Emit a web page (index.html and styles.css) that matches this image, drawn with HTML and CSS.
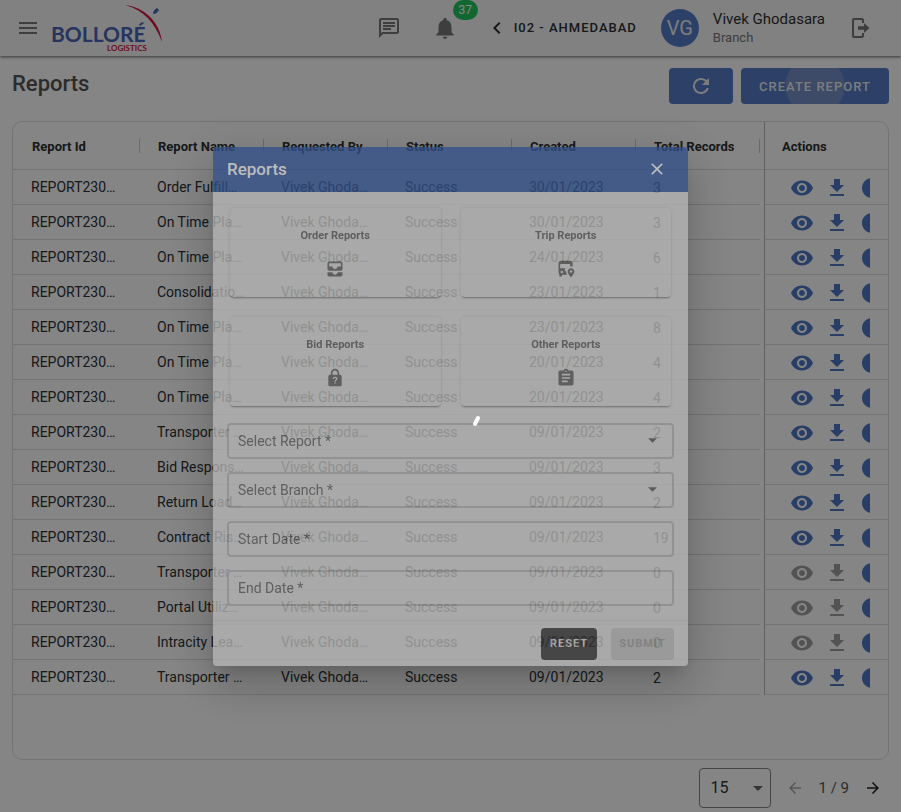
FILE: index.html
```html
<!DOCTYPE html>
<html lang="en">
<head>
<meta charset="utf-8">
<title>Reports</title>
<link rel="stylesheet" href="styles.css">
</head>
<body>
<svg class="sprite" aria-hidden="true">
  <symbol id="i-eye" viewBox="0 0 24 24"><path d="M12 4.5C7 4.5 2.73 7.61 1 12c1.73 4.39 6 7.5 11 7.5s9.27-3.11 11-7.5c-1.73-4.39-6-7.5-11-7.5zM12 17c-2.76 0-5-2.24-5-5s2.24-5 5-5 5 2.24 5 5-2.24 5-5 5zm0-8c-1.66 0-3 1.34-3 3s1.34 3 3 3 3-1.34 3-3-1.34-3-3-3z"/></symbol>
  <symbol id="i-download" viewBox="0 0 24 24"><path d="M19 9h-4V3H9v6H5l7 7 7-7zM5 18v2h14v-2H5z"/></symbol>
  <symbol id="i-info" viewBox="0 0 24 24"><path d="M12 2C6.48 2 2 6.48 2 12s4.48 10 10 10 10-4.48 10-10S17.52 2 12 2zm1 15h-2v-6h2v6zm0-8h-2V7h2v2z"/></symbol>
</svg>

<header class="topbar">
  <button class="icon-btn menu" aria-label="Menu"><svg width="24" height="24" viewBox="0 0 24 24"><path d="M3 18h18v-2H3v2zm0-5h18v-2H3v2zm0-7v2h18V6H3z"/></svg></button>
  <svg class="logo" width="112" height="52" viewBox="0 0 112 52" role="img" aria-label="Bolloré Logistics">
    <text class="logo-name" x="-1" y="40">BOLLORÉ</text>
    <text class="logo-sub" x="55" y="49">LOGISTICS</text>
    <path class="logo-arc" d="M73 3C92 5 108 20 110 40C103 21 92 8 73 3z"/>
    <path class="logo-mark" d="M101 12c0-3 2-5 4-6l2 2c-1 2-3 4-6 4z"/>
  </svg>
  <div class="grow"></div>
  <button class="icon-btn chat" aria-label="Messages"><svg width="24" height="24" viewBox="0 0 24 24"><path d="M4 4h16v12H5.170L4 17.170V4m0-2c-1.100 0-1.990.9-1.990 2L2 22l4-4h14c1.100 0 2-.9 2-2V4c0-1.100-.9-2-2-2H4zm2 10h8v2H6v-2zm0-3h12v2H6V9zm0-3h12v2H6V6z"/></svg></button>
  <button class="icon-btn bell" aria-label="Notifications"><svg width="26" height="26" viewBox="0 0 24 24"><path d="M12 22c1.100 0 2-.9 2-2h-4c0 1.100.89 2 2 2zm6-6v-5c0-3.070-1.640-5.640-4.500-6.320V4c0-.83-.67-1.500-1.500-1.500s-1.500.67-1.500 1.500v.68C7.630 5.360 6 7.920 6 11v5l-2 2v1h16v-1l-2-2z"/></svg><span class="badge">37</span></button>
  <button class="branch"><svg width="24" height="24" viewBox="0 0 24 24"><path d="M15.410 7.410L14 6l-6 6 6 6 1.410-1.410L10.830 12z"/></svg>I02 - AHMEDABAD</button>
  <div class="avatar">VG</div>
  <div class="user"><div class="user-name">Vivek Ghodasara</div><div class="user-role">Branch</div></div>
  <button class="icon-btn logout" aria-label="Log out"><svg width="20" height="22" viewBox="0 0 20 22"><path d="M13 6V3a2 2 0 0 0-2-2H3a2 2 0 0 0-2 2v16a2 2 0 0 0 2 2h8a2 2 0 0 0 2-2v-3h-2v3H3V3h8v3zM7 9.300v3.400h6V16l5.500-5L13 6v3.300z"/></svg></button>
</header>

<main class="page">
  <div class="page-head">
    <h1>Reports</h1>
    <button class="btn refresh" aria-label="Refresh"><svg width="24" height="24" viewBox="0 0 24 24"><path d="M17.650 6.350C16.200 4.900 14.210 4 12 4c-4.420 0-7.990 3.580-7.990 8s3.570 8 7.990 8c3.730 0 6.840-2.550 7.730-6h-2.080c-.82 2.330-3.040 4-5.650 4-3.310 0-6-2.690-6-6s2.690-6 6-6c1.660 0 3.140.69 4.220 1.780L13 11h7V4l-2.350 2.350z"/></svg></button>
    <button class="btn create">CREATE REPORT</button>
  </div>

  <section class="grid-card">
    <table>
      <colgroup><col class="c-id"><col><col><col><col><col class="c-total"><col class="c-act"></colgroup>
      <thead><tr><th>Report Id</th><th>Report Name</th><th>Requested By</th><th>Status</th><th>Created</th><th class="total">Total Records</th><th class="act">Actions</th></tr></thead>
      <tbody id="rows"></tbody>
    </table>
  </section>

  <footer class="pager">
    <select class="page-size" aria-label="Rows per page"><option>15</option></select>
    <button class="page-btn off" aria-label="Previous page" disabled><svg width="18" height="18" viewBox="0 0 24 24"><path d="M20 11H7.830l5.590-5.590L12 4l-8 8 8 8 1.410-1.410L7.830 13H20v-2z"/></svg></button>
    <span>1 / 9</span>
    <button class="page-btn" aria-label="Next page"><svg width="18" height="18" viewBox="0 0 24 24"><path d="M12 4l-1.410 1.410L16.170 11H4v2h12.170l-5.580 5.590L12 20l8-8z"/></svg></button>
  </footer>
</main>

<div class="backdrop">
  <div class="dialog" role="dialog" aria-labelledby="dlg-title">
    <div class="dialog-head">
      <h2 id="dlg-title">Reports</h2>
      <button class="icon-btn close" aria-label="Close"><svg width="20" height="20" viewBox="0 0 24 24"><path d="M19 6.410L17.590 5 12 10.590 6.410 5 5 6.410 10.590 12 5 17.590 6.410 19 12 13.410 17.590 19 19 17.590 13.410 12z"/></svg></button>
    </div>
    <div class="dialog-body">
      <div class="tiles">
        <button class="tile">Order Reports<svg width="20" height="20" viewBox="0 0 24 24"><path d="M19 3H5c-1.100 0-2 .9-2 2v7c0 1.100.9 2 2 2h14c1.100 0 2-.9 2-2V5c0-1.100-.9-2-2-2zm0 6h-4c0 1.620-1.380 3-3 3s-3-1.380-3-3H5V5h14v4zm-4 7h6v3c0 1.100-.9 2-2 2H5c-1.100 0-2-.9-2-2v-3h6c0 1.660 1.340 3 3 3s3-1.340 3-3z"/></svg></button>
        <button class="tile">Trip Reports<svg width="20" height="20" viewBox="0 0 24 24"><path d="M17 2H6C3.800 2 3 3.500 3 5.500V16c0 1 .4 1.700 1 2.200V21h3v-2h6l-1-4a1.500 1.500 0 1 1 1-4H5V6h12v3h3V5c0-2-1-3-3-3zM7 14a1.500 1.500 0 1 1 0 3 1.500 1.500 0 0 1 0-3zm11-3c-2.200 0-4 1.700-4 4 0 2.700 4 7 4 7s4-4.300 4-7c0-2.300-1.800-4-4-4zm0 5.500a1.500 1.500 0 1 1 0-3 1.500 1.500 0 0 1 0 3z"/></svg></button>
        <button class="tile">Bid Reports<svg width="20" height="20" viewBox="0 0 24 24"><path fill-rule="evenodd" d="M18 8h-1V6c0-2.760-2.240-5-5-5S7 3.240 7 6v2H6c-1.100 0-2 .9-2 2v10c0 1.100.9 2 2 2h12c1.100 0 2-.9 2-2V10c0-1.100-.9-2-2-2zM9 6c0-1.660 1.340-3 3-3s3 1.340 3 3v2H9V6zm2.200 13h1.600v-1.600h-1.600zm-2-5.700h1.500c0-.8.500-1.300 1.300-1.300s1.300.5 1.300 1.200c0 1.100-2.100 1.200-2.100 3.300h1.500c0-1.400 2.200-1.600 2.200-3.500 0-1.400-1.200-2.400-2.900-2.400s-2.800 1.100-2.800 2.700z"/></svg></button>
        <button class="tile">Other Reports<svg width="20" height="20" viewBox="0 0 24 24"><path d="M19 3h-4.180C14.400 1.840 13.300 1 12 1c-1.300 0-2.400.84-2.820 2H5c-1.100 0-2 .9-2 2v14c0 1.100.9 2 2 2h14c1.100 0 2-.9 2-2V5c0-1.100-.9-2-2-2zm-7 0c.55 0 1 .45 1 1s-.45 1-1 1-1-.45-1-1 .45-1 1-1zm2 14H7v-2h7v2zm3-4H7v-2h10v2zm0-4H7V7h10v2z"/></svg></button>
      </div>
      <select class="field" aria-label="Select Report"><option>Select Report *</option></select>
      <select class="field" aria-label="Select Branch"><option>Select Branch *</option></select>
      <input class="field" type="text" aria-label="Start Date" placeholder="Start Date *">
      <input class="field" type="text" aria-label="End Date" placeholder="End Date *">
    </div>
    <div class="dialog-foot">
      <button class="small-btn reset">RESET</button>
      <button class="small-btn submit" disabled>SUBMIT</button>
    </div>
  </div>
</div>

<div class="loader"><svg width="64" height="64" viewBox="0 0 64 64"><path d="M59 44l-3 6"/></svg></div>
<script src="script.js"></script>
</body>
</html>
```
FILE: styles.css
```css
* { box-sizing: border-box; }

body {
  margin: 0;
  min-height: 100vh;
  display: flex;
  flex-direction: column;
  background: #fff;
  color: #2c3032;
  font: 14px/20px Roboto, "Liberation Sans", sans-serif;
}

button, input, select { font: inherit; color: inherit; margin: 0; }
button { border: 0; padding: 0; background: none; }
svg { fill: currentColor; flex: none; }
h1, h2 { margin: 0; }
.sprite { position: absolute; width: 0; height: 0; }
.grow { flex: 1; }
.icon-btn { display: flex; color: #777; }

/* Top bar */
.topbar {
  height: 56px;
  flex: none;
  display: flex;
  align-items: center;
  padding: 0 30px 0 16px;
  background: #f8f8f8;
  box-shadow: 0 1px 3px rgba(0, 0, 0, .6);
}
.logo { margin-left: 12px; overflow: visible; }
.logo-name { font: 700 21px Lato, sans-serif; fill: #4a67b8; }
.logo-sub { font: 700 8px Lato, sans-serif; fill: #d01840; }
.logo-arc { fill: #d01840; }
.logo-mark { fill: #4a67b8; }
.chat { margin-right: 31px; }
.bell { position: relative; margin-right: 27px; }
.badge {
  position: absolute;
  left: 21px;
  top: -15px;
  width: 25px;
  height: 20px;
  border-radius: 10px;
  background: #22c55e;
  color: #fff;
  font-size: 12px;
}
.branch {
  display: flex;
  align-items: center;
  gap: 5px;
  margin-right: 24px;
  font-size: 13px;
  font-weight: 500;
  letter-spacing: 1px;
}
.avatar {
  width: 38px;
  height: 38px;
  margin-right: 14px;
  border-radius: 50%;
  background: #557cc8;
  color: #eee;
  font-size: 20px;
  line-height: 38px;
  text-align: center;
}
.user { margin-right: 26px; }
.user-name { font-size: 15px; line-height: 20px; }
.user-role { font-size: 13px; line-height: 18px; color: #777; }

/* Page */
.page {
  flex: 1;
  display: flex;
  flex-direction: column;
  padding: 12px 12px 4px;
}
.page-head { display: flex; gap: 8px; margin-bottom: 17px; }
h1 { flex: 1; font-size: 22px; line-height: 32px; font-weight: 500; color: #555; }
.btn {
  height: 36px;
  border-radius: 4px;
  background: #557cc8;
  color: #eee;
  font-size: 13px;
  font-weight: 500;
  letter-spacing: 1px;
}
.refresh { width: 64px; display: grid; place-items: center; }
.create {
  width: 148px;
  padding-top: 2px;
  background: radial-gradient(circle, #758fc8 29px, #557cc8 30px);
}

.grid-card {
  flex: 1;
  border: 1px solid #dcdde2;
  border-radius: 10px;
  overflow: hidden;
}
table { width: 100%; table-layout: fixed; border-spacing: 0; }
.c-id { width: 127px; }
.c-total { width: 128px; }
.c-act { width: 124px; }
th {
  height: 48px;
  padding: 2px 0 0 18px;
  border-bottom: 1px solid #dcdde2;
  text-align: left;
  font-size: 13px;
  font-weight: 700;
  white-space: nowrap;
  background: linear-gradient(#ccc, #ccc) right center / 1px 14px no-repeat;
}
th:first-child { padding-left: 19px; }
th.total { background-position: right 4px center; }
th.act, td.act { border-left: 1px solid #b4b8bc; background: none; }
th.act { padding-left: 17px; }
td {
  height: 35px;
  padding: 0 0 0 17px;
  border-bottom: 1px solid #dcdde2;
  white-space: nowrap;
}
td:first-child { padding-left: 18px; }
td.total {
  border-bottom: 0;
  background: linear-gradient(#dcdde2, #dcdde2) left bottom / calc(100% - 4px) 1px no-repeat;
}
td.act { padding-top: 2px; }
.actions { display: flex; gap: 11px; width: 88px; padding-left: 8px; overflow: hidden; }
.actions button {
  flex: none;
  width: 24px;
  height: 24px;
  display: grid;
  place-items: center;
  color: #5077c4;
}
.actions button:disabled { color: #a0a0a0; }
.actions svg { width: 24px; height: 24px; }

.pager {
  display: flex;
  align-items: center;
  justify-content: flex-end;
  gap: 15px;
  padding: 8px 7px 0 0;
  font-size: 15px;
  color: #555;
}
.page-size {
  width: 72px;
  height: 40px;
  padding: 0 11px;
  border: 1px solid #858585;
  border-radius: 4px;
  appearance: none;
  font-size: 16px;
  color: #333;
  background: url("data:image/svg+xml,%3Csvg xmlns='http://www.w3.org/2000/svg' viewBox='0 0 10 5'%3E%3Cpath fill='%23666' d='M0 0h10L5 5z'/%3E%3C/svg%3E") right 7px center / 10px 5px no-repeat;
}
.page-btn { display: flex; color: #222; }
.page-btn:disabled { color: #aaa; }

/* Dialog */
.backdrop {
  position: fixed;
  inset: 0;
  display: grid;
  place-items: center;
  background: rgba(0, 0, 0, .48);
}
.dialog {
  width: 475px;
  max-width: 100%;
  border-radius: 4px;
  overflow: hidden;
  opacity: .78;
  background: #b3b3b3;
  color: #545454;
  box-shadow: 0 11px 15px -7px rgba(0, 0, 0, .2), 0 24px 38px 3px rgba(0, 0, 0, .14), 0 9px 46px 8px rgba(0, 0, 0, .12);
}
.dialog-head {
  height: 45px;
  display: flex;
  align-items: center;
  justify-content: space-between;
  padding: 0 21px 0 14px;
  background: #324f88;
  color: #ccc;
}
h2 { font-size: 17px; font-weight: 500; }
.close { color: #d0d0d0; }
.dialog-body { display: flex; flex-direction: column; gap: 13px; padding: 16px 14px 14px; }
.tiles { display: grid; grid-template-columns: 1fr 1fr; gap: 20px; padding: 0 3px; margin-bottom: 4px; }
.tile {
  height: 89px;
  display: flex;
  flex-direction: column;
  align-items: center;
  justify-content: center;
  gap: 13px;
  border-radius: 4px;
  box-shadow: 0 2px 2px -1px rgba(0, 0, 0, .4), 0 0 3px rgba(0, 0, 0, .12);
  font-size: 11px;
  font-weight: 700;
}
.field {
  width: 100%;
  height: 36px;
  padding: 0 9px;
  border: 2px solid #969696;
  border-radius: 4px;
  appearance: none;
  background: none;
  font-size: 14px;
}
.field::placeholder { color: inherit; opacity: 1; }
select.field {
  background: url("data:image/svg+xml,%3Csvg xmlns='http://www.w3.org/2000/svg' viewBox='0 0 10 5'%3E%3Cpath fill='%23505050' d='M0 0h10L5 5z'/%3E%3C/svg%3E") right 15px center / 9px 5px no-repeat;
}
.dialog-foot {
  height: 46px;
  display: flex;
  align-items: center;
  justify-content: flex-end;
  gap: 14px;
  padding: 2px 14px 0;
  border-top: 1px solid #a6a6a6;
}
.small-btn {
  width: 56px;
  height: 32px;
  border-radius: 4px;
  font-size: 11px;
  font-weight: 700;
  letter-spacing: 1px;
}
.reset { background: #343434; color: #b4b4b4; }
.submit { width: 63px; background: #a0a0a0; color: #808080; }

.loader { position: fixed; inset: 0; display: grid; place-items: center; }
.loader path { fill: none; stroke: #fff; stroke-width: 4; stroke-linecap: round; }
```
FILE: script.js
```javascript
const reports = [
  ["Order Fulfill…", "30/01/2023", 3],
  ["On Time Pla…", "30/01/2023", 3],
  ["On Time Pla…", "24/01/2023", 6],
  ["Consolidatio…", "23/01/2023", 1],
  ["On Time Pla…", "23/01/2023", 8],
  ["On Time Pla…", "20/01/2023", 4],
  ["On Time Pla…", "20/01/2023", 4],
  ["Transporter …", "09/01/2023", 2],
  ["Bid Respons…", "09/01/2023", 3],
  ["Return Load…", "09/01/2023", 2],
  ["Contract Ris…", "09/01/2023", 19],
  ["Transporter …", "09/01/2023", 0],
  ["Portal Utiliz…", "09/01/2023", 0],
  ["Intracity Lea…", "09/01/2023", 0],
  ["Transporter …", "09/01/2023", 2]
];

const action = (icon, label, off) =>
  `<button aria-label="${label}"${off ? " disabled" : ""}><svg><use href="#${icon}"/></svg></button>`;

document.getElementById("rows").innerHTML = reports.map(([name, date, total]) => `
  <tr>
    <td>REPORT230…</td><td>${name}</td><td>Vivek Ghoda…</td><td>Success</td><td>${date}</td>
    <td class="total">${total}</td>
    <td class="act"><div class="actions">${action("i-eye", "View", !total)}${action("i-download", "Download", !total)}${action("i-info", "Details")}</div></td>
  </tr>`).join("");
```
